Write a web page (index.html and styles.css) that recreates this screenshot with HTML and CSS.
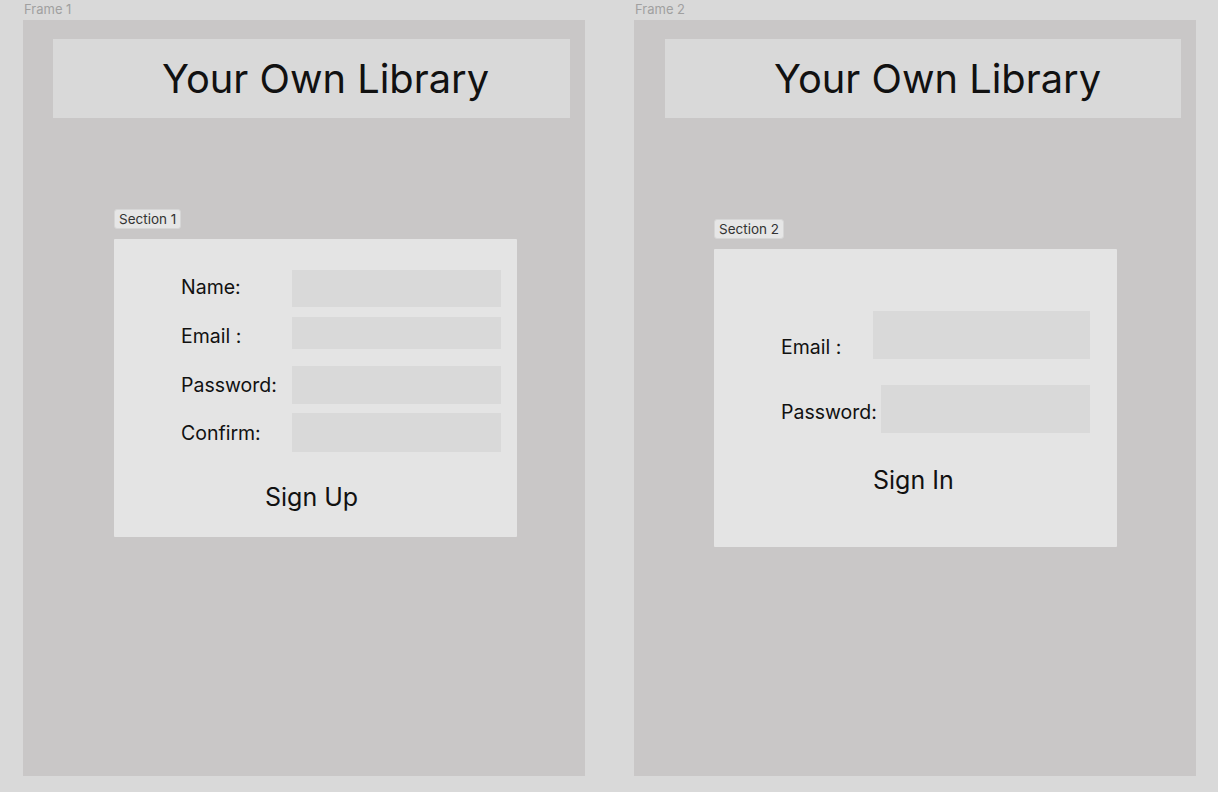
FILE: index.html
```html
<!DOCTYPE html>
<html>
<head>
<meta charset="utf-8">
<link rel="stylesheet" href="styles.css">
</head>
<body>
<div class="canvas">
  <div class="frame-wrap">
    <div class="frame-label">Frame 1</div>
    <div class="frame">
      <div class="header"><h1 class="title">Your Own Library</h1></div>
      <div class="section section-1">
        <div class="section-tag">Section 1</div>
        <div class="card card-signup">
          <div class="row row-name"><span class="label">Name:</span><div class="input"></div></div>
          <div class="row row-email"><span class="label">Email :</span><div class="input"></div></div>
          <div class="row row-pass"><span class="label">Password:</span><div class="input"></div></div>
          <div class="row row-confirm"><span class="label">Confirm:</span><div class="input"></div></div>
          <div class="action action-up">Sign Up</div>
        </div>
      </div>
    </div>
  </div>
  <div class="frame-wrap frame-wrap-2">
    <div class="frame-label">Frame 2</div>
    <div class="frame">
      <div class="header"><h1 class="title">Your Own Library</h1></div>
      <div class="section section-2">
        <div class="section-tag">Section 2</div>
        <div class="card card-signin">
          <div class="row2 row2-email"><span class="label">Email :</span><div class="input"></div></div>
          <div class="row2 row2-pass"><span class="label">Password:</span><div class="input"></div></div>
          <div class="action action-in">Sign In</div>
        </div>
      </div>
    </div>
  </div>
</div>
</body>
</html>
```
FILE: styles.css
```css
* { box-sizing: border-box; }
html, body {
  margin: 0;
  padding: 0;
  background: #d9d9d9;
  font-family: Inter, "Noto Sans", sans-serif;
  color: #111;
}
.canvas {
  display: flex;
  gap: 49px;
  padding-left: 23px;
  width: 1218px;
  height: 792px;
}
.frame-wrap {
  display: flex;
  flex-direction: column;
  width: 562px;
}
.frame-label {
  height: 20px;
  font-size: 13px;
  line-height: 19px;
  color: #a0a0a0;
  padding-left: 1px;
}
.frame {
  background: #c9c7c7;
  height: 756px;
  padding-top: 19px;
  padding-left: 30px;
}
.frame-wrap-2 .frame { padding-left: 31px; }
.header {
  width: 517px;
  height: 79px;
  background: #d9d9d9;
  display: flex;
  align-items: center;
  padding-left: 109px;
}
.frame-wrap-2 .header { width: 516px; }
.title {
  margin: 0;
  font-weight: 400;
  font-size: 39.8px;
  line-height: 1;
  color: #111;
}
.section-1 { margin-top: 90px; margin-left: 61px; }
.section-2 { margin-top: 100px; margin-left: 49px; }
.section-tag {
  display: inline-block;
  height: 20px;
  padding: 0 4px;
  font-size: 13.5px;
  line-height: 18px;
  color: #333;
  background: #e6e6e6;
  border: 1px solid #d6d6d6;
  border-radius: 3px;
  margin-bottom: 10px;
}
.card {
  width: 403px;
  height: 298px;
  background: #e4e4e4;
  border-radius: 1px;
  padding-left: 67px;
}
.label {
  font-size: 19.5px;
  color: #111;
}
.input { background: #d9d9d9; }
.card-signup { padding-top: 31px; }
.row {
  display: flex;
  align-items: center;
}
.row .label { width: 111px; }
.row .input { width: 209px; }
.row-name .label { margin-top: -3px; }
.row-name .input { height: 37px; }
.row-email { margin-top: 10px; }
.row-email .label { margin-top: 6px; }
.row-email .input { height: 32px; }
.row-pass { margin-top: 17px; }
.row-pass .input { height: 38px; }
.row-confirm { margin-top: 9px; }
.row-confirm .input { height: 39px; }
.action {
  font-size: 25px;
  line-height: 30px;
  color: #111;
}
.action-up { margin-top: 30px; padding-left: 84px; }
.card-signin { padding-top: 62px; }
.row2 { display: flex; }
.row2-email .label { width: 92px; padding-top: 24px; }
.row2-email .input { width: 217px; height: 48px; }
.row2-pass { margin-top: 26px; }
.row2-pass .label { width: 100px; padding-top: 15px; }
.row2-pass .input { width: 209px; height: 48px; }
.action-in { margin-top: 32px; padding-left: 92px; }
```
